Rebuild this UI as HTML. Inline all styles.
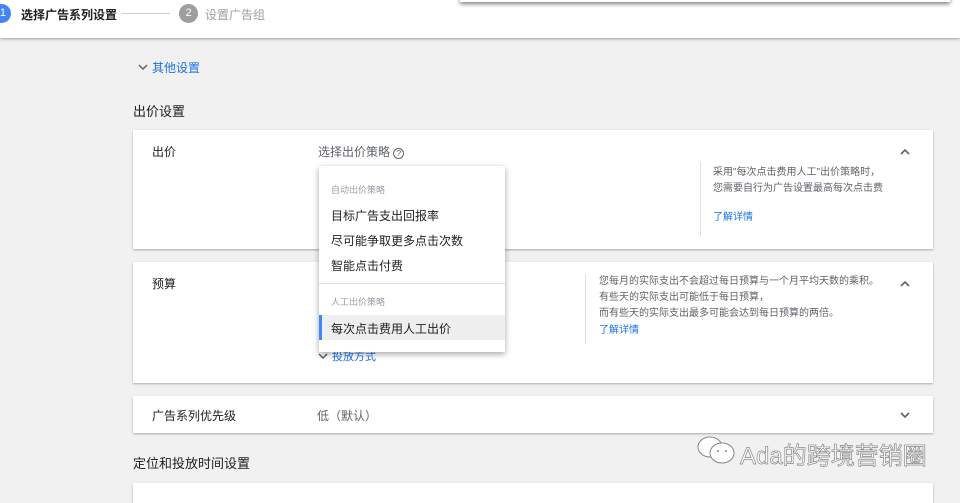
<!DOCTYPE html>
<html><head><meta charset="utf-8"><style>
*{margin:0;padding:0;box-sizing:border-box}
body{width:960px;height:493px;overflow:hidden;background:#f1f1f1;font-family:"Liberation Sans","Noto Sans CJK SC",sans-serif;position:relative;color:#202124}
.a{position:absolute}
.card{position:absolute;left:133px;width:800px;background:#fff;box-shadow:0 1px 2px rgba(0,0,0,.3)}
.t{font-size:12px}
.g{color:#5f6368}
.b{color:#1a73e8}
svg.c{position:absolute;width:10px;height:6px}
</style></head><body>
<div class="a" style="left:0;top:0;width:960px;height:38px;background:#fff;box-shadow:0 1px 3px rgba(0,0,0,.35)"></div>
<div class="a" style="left:460px;top:-10px;width:490px;height:12px;background:#fff;box-shadow:0 2px 4px rgba(0,0,0,.5)"></div>
<div class="a" style="left:-8px;top:4px;width:19px;height:19px;border-radius:50%;background:#4285f4;color:#fff;font-size:11px;line-height:19px;text-align:right;padding-right:5px">1</div>
<div class="a" style="left:21px;top:6px;font-weight:bold;font-size:12px">选择广告系列设置</div>
<div class="a" style="left:122px;top:13px;width:48px;height:1px;background:#ccc"></div>
<div class="a" style="left:179px;top:4px;width:19px;height:19px;border-radius:50%;background:#9e9e9e;color:#fff;font-size:11px;line-height:19px;text-align:center">2</div>
<div class="a t" style="left:205px;top:6px;color:#9aa0a6">设置广告组</div>
<svg class="c" style="left:138px;top:64px" viewBox="0 0 10 6"><path d="M1 1l4 4 4-4" fill="none" stroke="#5f6368" stroke-width="1.5"/></svg>
<div class="a t b" style="left:152px;top:59px">其他设置</div>
<div class="a" style="left:133px;top:101px;font-size:13px">出价设置</div>

<div class="card" style="top:130px;height:119px">
<div class="a t" style="left:19px;top:13px">出价</div>
<div class="a t g" style="left:185px;top:13px">选择出价策略 <span style="display:inline-block;width:11px;height:11px;border:1px solid #5f6368;border-radius:50%;font-size:8px;line-height:9px;text-align:center">?</span></div>
<div class="a" style="left:567px;top:32px;width:1px;height:74px;background:#e0e0e0"></div>
<div class="a g" style="left:580px;top:35px;font-size:10px;line-height:16px;width:170px;white-space:nowrap;overflow:hidden">采用"每次点击费用人工"出价策略时，<br>您需要自行为广告设置最高每次点击费</div>
<div class="a b" style="left:580px;top:78px;font-size:10px">了解详情</div>
<svg class="c" style="left:767px;top:19px" viewBox="0 0 10 6"><path d="M1 5l4-4 4 4" fill="none" stroke="#5f6368" stroke-width="1.6"/></svg>
</div>

<div class="card" style="top:262px;height:121px">
<div class="a t" style="left:19px;top:13px">预算</div>
<div class="a" style="left:452px;top:12px;width:1px;height:70px;background:#e0e0e0"></div>
<div class="a g" style="left:466px;top:12px;font-size:10px;line-height:16px">您每月的实际支出不会超过每日预算与一个月平均天数的乘积。<br>有些天的实际支出可能低于每日预算，<br>而有些天的实际支出最多可能会达到每日预算的两倍。</div>
<div class="a b" style="left:466px;top:59px;font-size:10px">了解详情</div>
<svg class="c" style="left:185px;top:91px" viewBox="0 0 10 6"><path d="M1 1l4 4 4-4" fill="none" stroke="#5f6368" stroke-width="1.5"/></svg>
<div class="a b" style="left:199px;top:86px;font-size:11px">投放方式</div>
<svg class="c" style="left:767px;top:19px" viewBox="0 0 10 6"><path d="M1 5l4-4 4 4" fill="none" stroke="#5f6368" stroke-width="1.6"/></svg>
</div>

<div class="card" style="top:396px;height:37px">
<div class="a t" style="left:19px;top:11px">广告系列优先级</div>
<div class="a t g" style="left:184px;top:11px">低（默认）</div>
<svg class="c" style="left:767px;top:16px" viewBox="0 0 10 6"><path d="M1 1l4 4 4-4" fill="none" stroke="#5f6368" stroke-width="1.6"/></svg>
</div>
<div class="a" style="left:133px;top:453px;font-size:13px">定位和投放时间设置</div>
<div class="card" style="top:483px;height:20px"></div>

<div class="a" style="left:319px;top:166px;width:186px;height:186px;background:#fff;box-shadow:0 2px 6px rgba(0,0,0,.35)">
<div class="a" style="left:12px;top:17px;font-size:9px;color:#9aa0a6">自动出价策略</div>
<div class="a t" style="left:12px;top:41px">目标广告支出回报率</div>
<div class="a t" style="left:12px;top:66px">尽可能争取更多点击次数</div>
<div class="a t" style="left:12px;top:91px">智能点击付费</div>
<div class="a" style="left:0;top:117px;width:186px;height:1px;background:#e0e0e0"></div>
<div class="a" style="left:12px;top:129px;font-size:9px;color:#9aa0a6">人工出价策略</div>
<div class="a" style="left:0;top:149px;width:186px;height:25px;background:#eeeeee;border-left:3px solid #4285f4"></div>
<div class="a t" style="left:12px;top:154px">每次点击费用人工出价</div>
</div>

<svg class="a" style="left:696px;top:433px" width="42" height="34" viewBox="0 0 42 34"><ellipse cx="14" cy="14" rx="12" ry="10" fill="#fff" stroke="#888" stroke-width="1"/><ellipse cx="26" cy="20" rx="12" ry="10" fill="#fff" stroke="#888" stroke-width="1"/><circle cx="22" cy="18" r="1" fill="#888"/><circle cx="30" cy="18" r="1" fill="#888"/></svg>
<div class="a" style="left:740px;top:436px;font-size:24px;color:#fff;-webkit-text-stroke:0.7px #888">Ada的跨境营销圈</div>
</body></html>
